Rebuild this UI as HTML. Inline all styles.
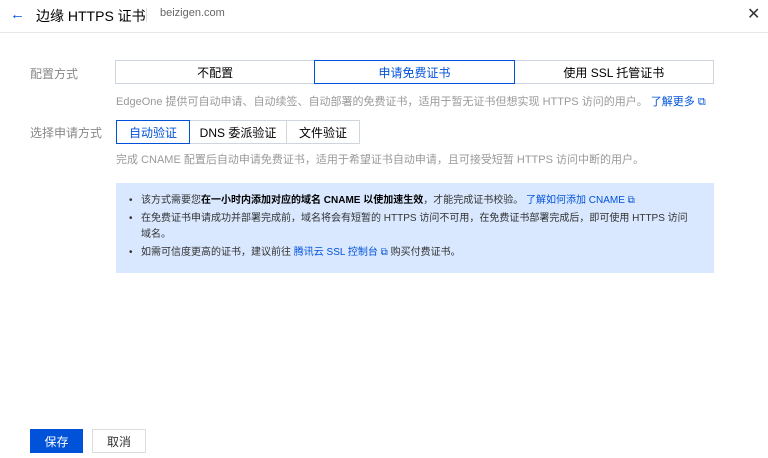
<!DOCTYPE html>
<html><head><meta charset="utf-8"><style>
*{box-sizing:border-box;margin:0;padding:0}
body{width:768px;height:458px;background:#fff;font-family:"Liberation Sans","Noto Sans CJK SC",sans-serif;position:relative;overflow:hidden;color:#000}
.a{position:absolute;white-space:nowrap}
.hdr{position:absolute;left:0;top:0;width:768px;height:33px;border-bottom:1px solid #e8e8e8}
.lbl{color:#888;font-size:12px}
.seg{position:absolute;display:flex;height:24px;top:60px;left:116px;width:598px}
.seg div{flex:1;border:1px solid #cfd5de;display:flex;align-items:center;justify-content:center;font-size:12px;color:#000;margin-left:-1px}
.seg .on{border-color:#0052d9;color:#0052d9;z-index:1}
.seg2{position:absolute;display:flex;height:24px;top:120px;left:116px}
.seg2 div{border:1px solid #cfd5de;display:flex;align-items:center;justify-content:center;font-size:12px;margin-left:-1px}
.seg2 .on{border-color:#0052d9;color:#0052d9;z-index:1}
.help{font-size:11px;color:#999}
.box{position:absolute;left:116px;top:183px;width:598px;height:90px;background:#d9e8ff;font-size:10px;color:#333}
.box p{position:absolute;left:14px;line-height:16px;white-space:nowrap}
.box p:before{content:"•";position:absolute;left:-1px;color:#333}
.box span.i{padding-left:11px;display:block}
.lk{color:#0052d9}
b{color:#000}
</style></head><body>
<div class="hdr"></div>
<div class="a" style="left:10px;top:6px;color:#0052d9;font-size:15px">←</div>
<div class="a" style="left:36px;top:6px;font-size:14px;color:#000">边缘 HTTPS 证书</div>
<div class="a" style="left:146px;top:8px;width:1px;height:14px;background:#ddd"></div>
<div class="a" style="left:160px;top:7px;font-size:11px;color:#666">beizigen.com</div>
<div class="a" style="left:747px;top:4px;font-size:16px;color:#333">✕</div>
<div class="a lbl" style="left:30px;top:65px">配置方式</div>
<div class="seg"><div>不配置</div><div class="on">申请免费证书</div><div>使用 SSL 托管证书</div></div>
<div class="a help" style="left:116px;top:93px">EdgeOne 提供可自动申请、自动续签、自动部署的免费证书，适用于暂无证书但想实现 HTTPS 访问的用户。 <span class="lk">了解更多 ⧉</span></div>
<div class="a lbl" style="left:30px;top:124px">选择申请方式</div>
<div class="seg2"><div class="on" style="width:74px;margin-left:0">自动验证</div><div style="width:98px">DNS 委派验证</div><div style="width:74px">文件验证</div></div>
<div class="a help" style="left:116px;top:151px">完成 CNAME 配置后自动申请免费证书，适用于希望证书自动申请，且可接受短暂 HTTPS 访问中断的用户。</div>
<div class="box">
<p style="top:10px"><span class="i">该方式需要您<b>在一小时内添加对应的域名 CNAME 以使加速生效</b>，才能完成证书校验。 <span class="lk">了解如何添加 CNAME ⧉</span></span></p>
<p style="top:28px"><span class="i">在免费证书申请成功并部署完成前，域名将会有短暂的 HTTPS 访问不可用，在免费证书部署完成后，即可使用 HTTPS 访问<br>域名。</span></p>
<p style="top:62px"><span class="i">如需可信度更高的证书，建议前往 <span class="lk">腾讯云 SSL 控制台 ⧉</span> 购买付费证书。</span></p>
</div>
<div class="a" style="left:30px;top:429px;width:53px;height:24px;background:#0052d9;color:#fff;font-size:12px;display:flex;align-items:center;justify-content:center">保存</div>
<div class="a" style="left:92px;top:429px;width:54px;height:24px;border:1px solid #dcdcdc;color:#333;font-size:12px;display:flex;align-items:center;justify-content:center">取消</div>
</body></html>
